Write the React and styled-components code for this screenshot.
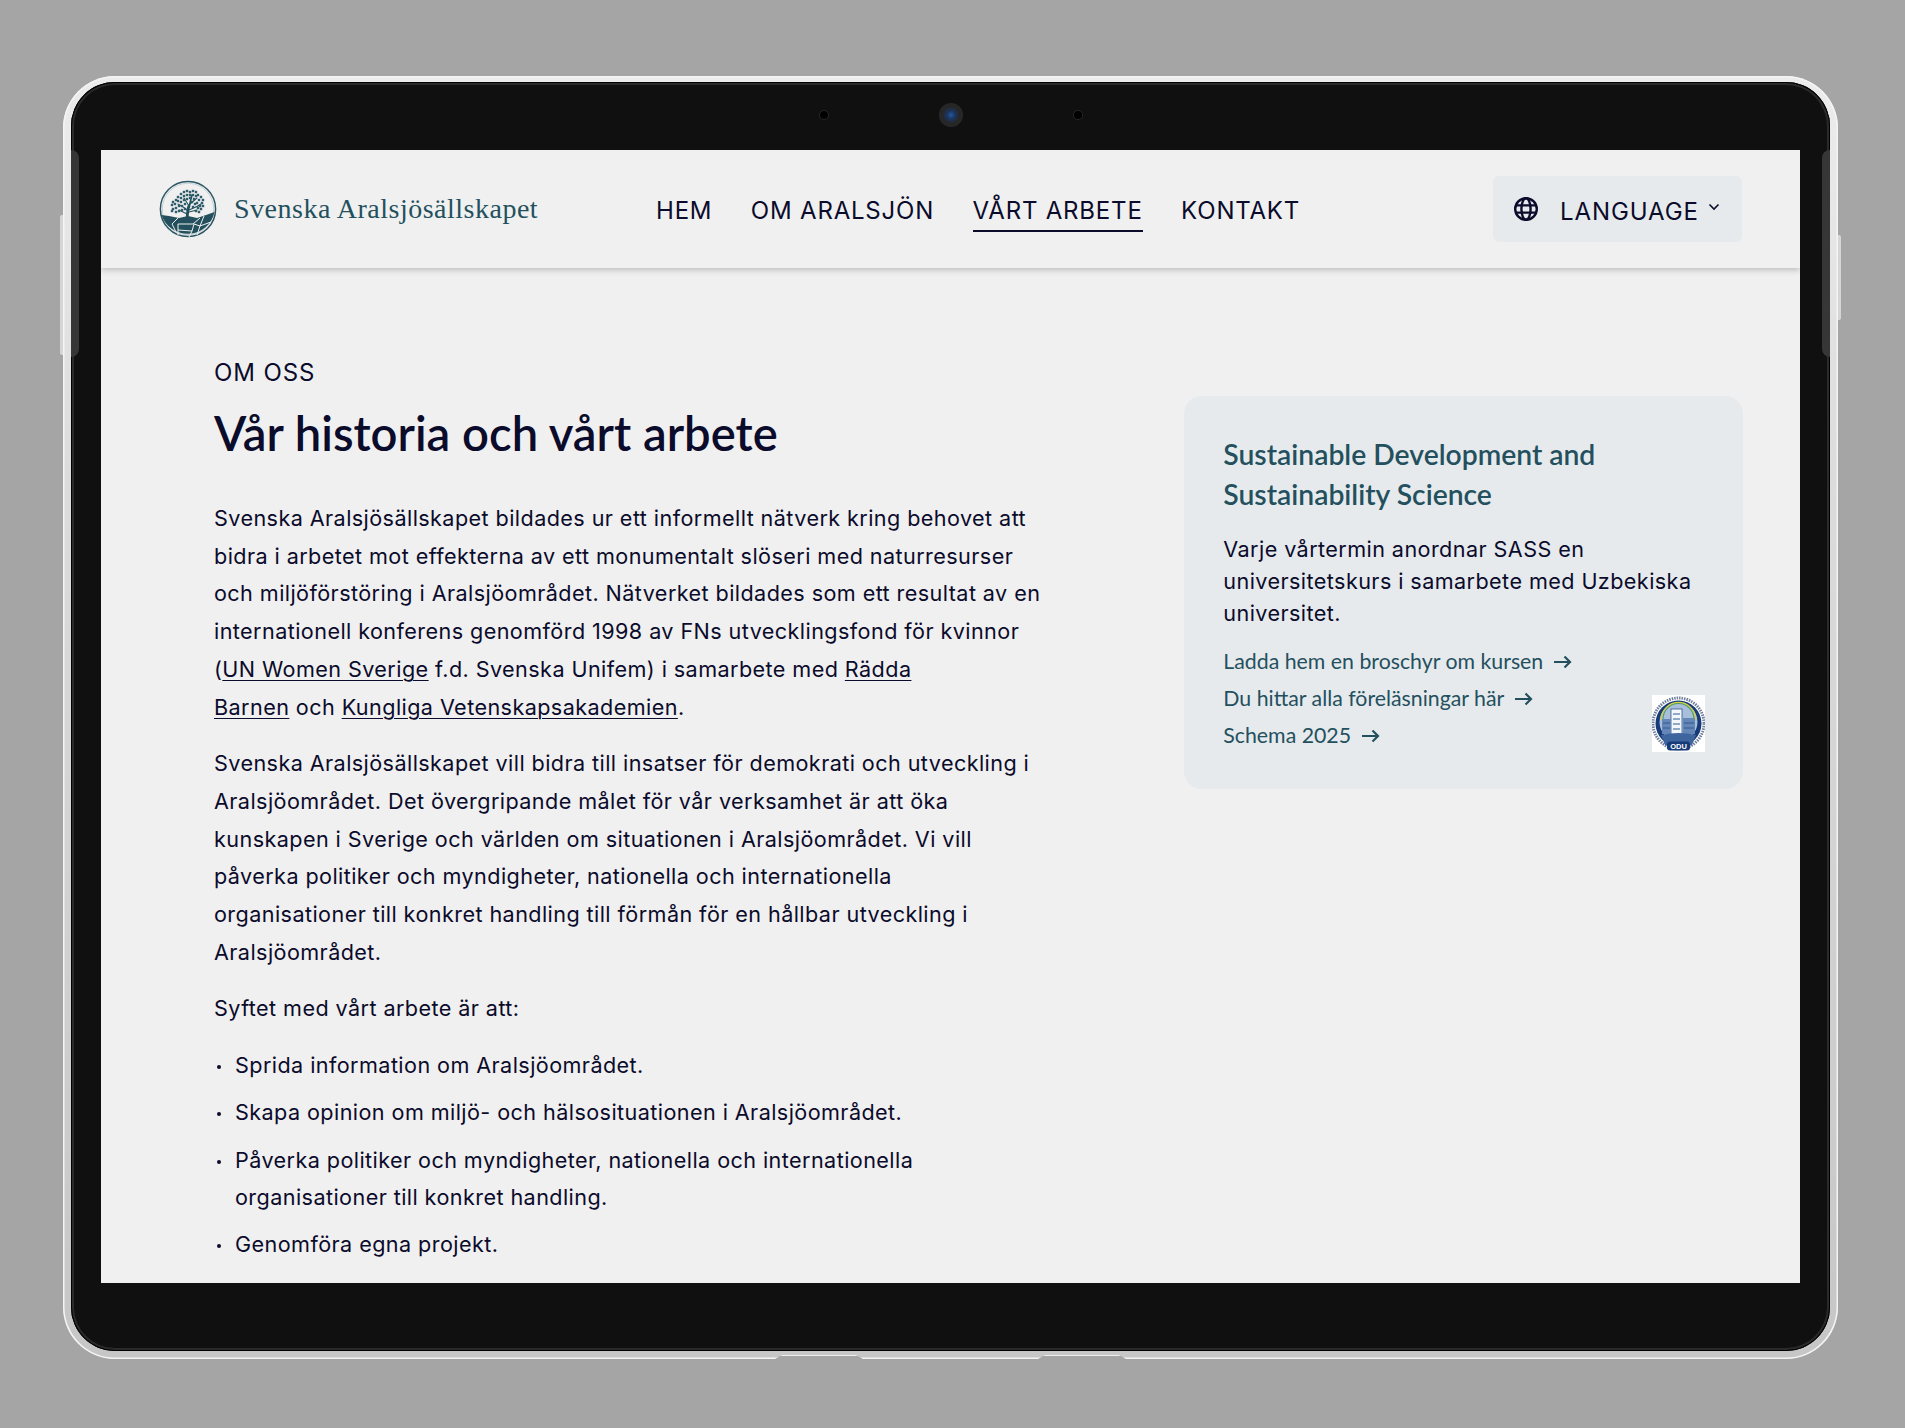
import React from 'react';
import styled, { createGlobalStyle } from 'styled-components';

const GlobalStyle = createGlobalStyle`
  html, body {
    margin: 0;
    padding: 0;
    background: #a5a5a5;
  }
  * {
    box-sizing: border-box;
  }
`;

// crown of the tree in the logo, one small square per leaf
const treeDots = [
  [22, 14], [25, 12], [28, 11], [31, 12], [34, 11], [37, 12], [39, 15], [42, 17], [44, 20], [43, 23],
  [40, 20], [37, 16], [34, 15], [31, 15], [28, 15], [25, 16], [22, 18], [19, 17], [17, 20], [14, 22],
  [13, 25], [16, 24], [19, 21], [22, 22], [25, 20], [28, 19], [35, 19], [38, 23], [41, 26], [44, 26],
  [14, 29], [17, 28], [20, 26], [23, 26], [26, 24], [36, 24], [39, 28], [42, 29], [34, 27], [17, 32],
  [20, 31], [23, 30], [26, 29], [37, 31], [40, 32], [13, 31], [31, 18], [33, 22],
];

function Logo() {
  return (
    <svg width="58" height="58" viewBox="0 0 58 58">
      <circle cx="29" cy="29" r="27.6" fill="none" stroke="#2a5563" strokeWidth="1.5" />
      <circle cx="29" cy="29" r="25.7" fill="none" stroke="#a9bcc2" strokeWidth="0.6" />
      <path d="M2.5 35 L10 36 L20 38 L29 36 L38 38 L47 35 L55.5 32 A27.5 27.5 0 0 1 2.5 35 Z" fill="#24505e" />
      <g stroke="#f0f0f0" strokeWidth="1" fill="none">
        <path d="M19 38 L13 44 L17 52" />
        <path d="M19 44 L34 44 L41 38" />
        <path d="M19 44 L19 55" />
        <path d="M19 50 L33 51 L35 44" />
        <path d="M33 51 L30 57" />
        <path d="M41 46 L45 36" />
        <path d="M35 44 L41 46 L38 55" />
        <path d="M41 46 L52 42" />
      </g>
      <g stroke="#24505e" fill="none" strokeLinecap="round">
        <path d="M28 38 C29 33 28 30 30 26" strokeWidth="2.8" />
        <path d="M30 27 L33 15" strokeWidth="1.6" />
        <path d="M29 31 C26 28 23 26 19 24 M30 26 L25 18 M31 24 L38 18 M30 30 C34 28 38 27 42 24 M28 34 L20 30 M30 32 L38 30" strokeWidth="1.1" />
      </g>
      <g fill="#2f5c6a">
        {treeDots.map(([x, y]) => (
          <rect key={`${x}-${y}`} x={x - 1.2} y={y - 1.2} width="2.4" height="2.4" />
        ))}
      </g>
    </svg>
  );
}

function Seal() {
  return (
    <SealBox width="53" height="57" viewBox="0 0 53 57">
      <rect width="53" height="57" fill="#ffffff" />
      <circle cx="26.5" cy="28.5" r="25.5" fill="none" stroke="#6f7f9c" strokeWidth="3" strokeDasharray="1.5 1" />
      <circle cx="26.5" cy="28.5" r="23" fill="#173a78" />
      <circle cx="26.5" cy="27" r="19" fill="#a9bedb" />
      <path d="M9 25 A17.5 17.5 0 0 1 44 25" fill="none" stroke="#d8cf4a" strokeWidth="1.3" />
      <path d="M11 24 A15.5 15.5 0 0 1 42 24" fill="none" stroke="#4f9f58" strokeWidth="1.1" />
      <rect x="19" y="14" width="11" height="26" fill="#f3f6fa" stroke="#2f5a94" strokeWidth="0.8" />
      <rect x="10" y="24" width="9" height="15" fill="#6487b8" />
      <rect x="31" y="23" width="12" height="16" fill="#6487b8" />
      <path d="M21 19 H28 M21 24 H28 M21 29 H28 M21 34 H28 M11 28 H18 M11 33 H18 M32 28 H42 M32 33 H42" stroke="#2f5a94" strokeWidth="1" />
      <path d="M9 40 Q26.5 36 44 40 L40 50 Q26.5 56 13 50 Z" fill="#3f659f" />
      <rect x="15" y="46.5" width="23" height="9" rx="3" fill="#173a78" />
      <text x="26.5" y="54" textAnchor="middle" fontFamily="Liberation Sans, sans-serif" fontSize="7.5" fontWeight="700" fill="#ffffff">ODU</text>
    </SealBox>
  );
}

function Globe() {
  return (
    <svg width="26" height="26" viewBox="0 0 26 26" fill="none" stroke="#0b0b2b" strokeWidth="2.4">
      <circle cx="13" cy="13" r="10.8" />
      <ellipse cx="13" cy="13" rx="4.6" ry="10.8" />
      <path d="M3 9.4 H23 M3 16.6 H23" />
    </svg>
  );
}

function Arrow() {
  return (
    <svg width="18" height="14" viewBox="0 0 18 14" fill="none" stroke="#24505e" strokeWidth="2.2">
      <path d="M0 7 H16 M10.5 1.5 L16 7 L10.5 12.5" />
    </svg>
  );
}

function App() {
  return (
    <Page>
      <GlobalStyle />
      <Frame>
        <VolumeKey />
        <PowerKey />
        <BottomNotch $left={712} />
        <BottomNotch $left={975} />
        <Bezel>
          <SideStrip $side="left" />
          <SideStrip $side="right" />
          <CameraBar>
            <Sensor />
            <Camera />
            <Sensor />
          </CameraBar>
          <Screen>
            <Header>
              <Brand>
                <Logo />
                <BrandName>Svenska Aralsjösällskapet</BrandName>
              </Brand>
              <Nav>
                <NavLink>HEM</NavLink>
                <NavLink>OM ARALSJÖN</NavLink>
                <NavLink $active>VÅRT ARBETE</NavLink>
                <NavLink>KONTAKT</NavLink>
              </Nav>
              <LanguageButton>
                <Globe />
                <LanguageLabel>LANGUAGE</LanguageLabel>
                <Chevron viewBox="0 0 12 8" width="12" height="8">
                  <path d="M1.5 1.5 L6 6 L10.5 1.5" fill="none" stroke="#0b0b2b" strokeWidth="1.6" />
                </Chevron>
              </LanguageButton>
            </Header>
            <Main>
              <Article>
                <Eyebrow>OM OSS</Eyebrow>
                <Title>Vår historia och vårt arbete</Title>
                <Paragraph>
                  Svenska Aralsjösällskapet bildades ur ett informellt nätverk kring behovet att<br />
                  bidra i arbetet mot effekterna av ett monumentalt slöseri med naturresurser<br />
                  och miljöförstöring i Aralsjöområdet. Nätverket bildades som ett resultat av en<br />
                  internationell konferens genomförd 1998 av FNs utvecklingsfond för kvinnor<br />
                  (<TextLink>UN Women Sverige</TextLink> f.d. Svenska Unifem) i samarbete med <TextLink>Rädda</TextLink><br />
                  <TextLink>Barnen</TextLink> och <TextLink>Kungliga Vetenskapsakademien</TextLink>.
                </Paragraph>
                <Paragraph>
                  Svenska Aralsjösällskapet vill bidra till insatser för demokrati och utveckling i<br />
                  Aralsjöområdet. Det övergripande målet för vår verksamhet är att öka<br />
                  kunskapen i Sverige och världen om situationen i Aralsjöområdet. Vi vill<br />
                  påverka politiker och myndigheter, nationella och internationella<br />
                  organisationer till konkret handling till förmån för en hållbar utveckling i<br />
                  Aralsjöområdet.
                </Paragraph>
                <Paragraph>Syftet med vårt arbete är att:</Paragraph>
                <List>
                  <li>Sprida information om Aralsjöområdet.</li>
                  <li>Skapa opinion om miljö- och hälsosituationen i Aralsjöområdet.</li>
                  <li>
                    Påverka politiker och myndigheter, nationella och internationella<br />
                    organisationer till konkret handling.
                  </li>
                  <li>Genomföra egna projekt.</li>
                </List>
              </Article>
              <Card>
                <CardTitle>
                  Sustainable Development and<br />
                  Sustainability Science
                </CardTitle>
                <CardText>
                  Varje vårtermin anordnar SASS en<br />
                  universitetskurs i samarbete med Uzbekiska<br />
                  universitet.
                </CardText>
                <CardFooter>
                  <CardLinks>
                    <CardLink>Ladda hem en broschyr om kursen <Arrow /></CardLink>
                    <CardLink>Du hittar alla föreläsningar här <Arrow /></CardLink>
                    <CardLink>Schema 2025 <Arrow /></CardLink>
                  </CardLinks>
                  <Seal />
                </CardFooter>
              </Card>
            </Main>
          </Screen>
        </Bezel>
      </Frame>
    </Page>
  );
}

const Page = styled.div`
  width: 1905px;
  height: 1428px;
  padding: 76px 0 0 63px;
  overflow: hidden;
  background: #a5a5a5;
`;

const Frame = styled.div`
  position: relative;
  width: 1775px;
  height: 1283px;
  padding: 6px 8px 8px 8px;
  border-radius: 52px;
  background: linear-gradient(180deg, #ececec 0%, #dcdcdc 30%, #c6c6c6 100%);
  box-shadow: inset 0 0 0 1.5px #f4f4f4;
`;

const VolumeKey = styled.div`
  position: absolute;
  left: -3px;
  top: 139px;
  width: 3px;
  height: 140px;
  border-radius: 2px 0 0 2px;
  background: #d6d6d6;
`;

const PowerKey = styled.div`
  position: absolute;
  right: -3px;
  top: 159px;
  width: 3px;
  height: 85px;
  border-radius: 0 2px 2px 0;
  background: #d6d6d6;
`;

const BottomNotch = styled.div`
  position: absolute;
  bottom: 0;
  left: ${(props) => props.$left}px;
  width: 88px;
  height: 4px;
  background: #a5a5a5;
  border-top: 1px solid #efefef;
  clip-path: polygon(0 100%, 8% 0, 92% 0, 100% 100%);
`;

const Bezel = styled.div`
  position: relative;
  height: 100%;
  padding: 0 30px;
  border-radius: 44px;
  background: #101010;
  box-shadow: inset 0 0 0 1px #000, inset 0 0 0 3px #2a2a2a;
`;

const SideStrip = styled.div`
  position: absolute;
  top: 68px;
  ${(props) => props.$side}: 0;
  width: 8px;
  height: 207px;
  background: #363636;
  border-radius: ${(props) => (props.$side === 'left' ? '0 8px 8px 0' : '8px 0 0 8px')};
`;

const CameraBar = styled.div`
  display: flex;
  align-items: center;
  justify-content: center;
  gap: 111px;
  height: 66px;
`;

const Sensor = styled.div`
  width: 8px;
  height: 8px;
  border-radius: 50%;
  background: #000;
  box-shadow: 0 0 0 1px #262626;
`;

const Camera = styled.div`
  width: 24px;
  height: 24px;
  border-radius: 50%;
  background: radial-gradient(circle, #25589f 0, #1a3560 24%, #262626 50%, #2a2a2a 100%);
`;

const Screen = styled.div`
  height: 1133px;
  margin-top: 2px;
  overflow: hidden;
  background: #f0f0f0;
`;

const Header = styled.header`
  position: relative;
  display: grid;
  grid-template-columns: 497px 1fr auto;
  align-items: center;
  height: 118px;
  padding: 0 58px 0 58px;
  box-shadow: 0 2px 6px rgba(0, 0, 0, 0.22);
`;

const Brand = styled.div`
  display: flex;
  align-items: center;
  gap: 17px;
`;

const BrandName = styled.span`
  font-family: "Liberation Serif", serif;
  font-size: 28px;
  letter-spacing: 0.5px;
  color: #24505e;
`;

const Nav = styled.nav`
  display: flex;
  gap: 38.5px;
  margin-top: 9px;
`;

const NavLink = styled.a`
  padding-bottom: 3px;
  font-family: Inter, sans-serif;
  font-size: 24px;
  letter-spacing: 0.8px;
  line-height: 32px;
  color: #0b0b2b;
  border-bottom: 2px solid ${(props) => (props.$active ? '#0b0b2b' : 'transparent')};
`;

const LanguageButton = styled.div`
  display: flex;
  align-items: center;
  width: 249px;
  height: 66px;
  padding-left: 20px;
  border-radius: 6px;
  background: #e6eaed;
  color: #0b0b2b;
`;

const LanguageLabel = styled.span`
  margin: 4px 0 0 21px;
  font-family: Inter, sans-serif;
  font-size: 24px;
  letter-spacing: 0.9px;
  color: #0b0b2b;
`;

const Chevron = styled.svg`
  margin: -4px 0 0 9px;
`;

const Main = styled.main`
  display: flex;
  align-items: flex-start;
  padding: 90px 57px 0 113px;
`;

const Article = styled.article`
  width: 971px;
  font-family: Inter, sans-serif;
  font-size: 21.6px;
  letter-spacing: 0.42px;
  color: #0b0b2b;
`;

const Eyebrow = styled.div`
  font-size: 24px;
  letter-spacing: 0.9px;
  line-height: 30px;
`;

const Title = styled.h1`
  margin: 15px 0 37px;
  font-family: Lato, sans-serif;
  font-size: 47.2px;
  font-weight: 600;
  letter-spacing: 0;
  line-height: 60px;
  color: #0b0b2b;
`;

const Paragraph = styled.p`
  margin: 0 0 19px;
  line-height: 37.7px;
  white-space: nowrap;
`;

const TextLink = styled.a`
  text-decoration: underline;
  text-underline-offset: 3px;
  text-decoration-thickness: 1px;
`;

const List = styled.ul`
  margin: 0;
  padding: 0 0 0 21px;
  list-style: none;
  line-height: 37.7px;
  white-space: nowrap;

  li {
    position: relative;
    margin-bottom: 9.5px;
  }

  li::before {
    content: "";
    position: absolute;
    left: -18px;
    top: 18px;
    width: 4px;
    height: 4px;
    border-radius: 50%;
    background: #0b0b2b;
  }
`;

const Card = styled.aside`
  width: 559px;
  height: 393px;
  margin-top: 38px;
  padding: 38px 38px 0 39px;
  border-radius: 18px;
  background: #e6eaed;
`;

const CardTitle = styled.h2`
  margin: 0 0 19px;
  font-family: Lato, sans-serif;
  font-size: 28.3px;
  font-weight: 600;
  line-height: 40px;
  color: #24505e;
`;

const CardText = styled.p`
  margin: 0 0 14px;
  font-family: Inter, sans-serif;
  font-size: 21.6px;
  letter-spacing: 0.42px;
  line-height: 32px;
  color: #0b0b2b;
`;

const CardFooter = styled.div`
  display: flex;
  justify-content: space-between;
  align-items: flex-end;
`;

const CardLinks = styled.div`
  display: flex;
  flex-direction: column;
`;

const CardLink = styled.a`
  display: flex;
  align-items: center;
  gap: 11px;
  font-family: Lato, sans-serif;
  font-size: 21.3px;
  line-height: 37px;
  color: #24505e;
`;

const SealBox = styled.svg`
  margin-bottom: 2px;
`;

export default App;
